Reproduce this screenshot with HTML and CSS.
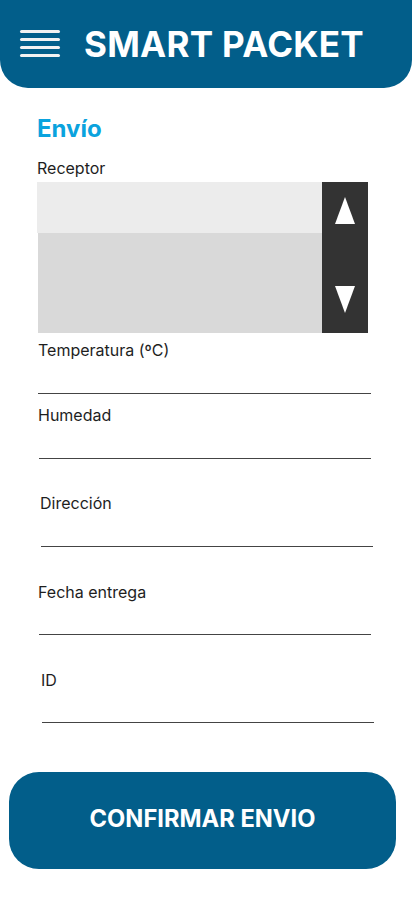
FILE: index.html
```html
<!DOCTYPE html>
<html lang="es">
<head>
<meta charset="utf-8">
<title>Smart Packet</title>
<link rel="stylesheet" href="styles.css">
</head>
<body>
<header class="topbar">
  <div class="burger"><span></span><span></span><span></span><span></span></div>
  <h1 class="brand">SMART PACKET</h1>
</header>
<main class="form">
  <h2 class="title">Envío</h2>
  <div class="label">Receptor</div>
  <div class="listbox">
    <div class="list">
      <div class="item item-sel"></div>
      <div class="item item-rest"></div>
    </div>
    <div class="scroll">
      <svg width="20" height="27" viewBox="0 0 20 27"><polygon points="10,0 20,27 0,27" fill="#fff"/></svg>
      <svg width="20" height="27" viewBox="0 0 20 27"><polygon points="0,0 20,0 10,27" fill="#fff"/></svg>
    </div>
  </div>
  <div class="field f-temp"><div class="label">Temperatura (ºC)</div><div class="line"></div></div>
  <div class="field f-hum"><div class="label">Humedad</div><div class="line"></div></div>
  <div class="field f-dir"><div class="label">Dirección</div><div class="line"></div></div>
  <div class="field f-fecha"><div class="label">Fecha entrega</div><div class="line"></div></div>
  <div class="field f-id"><div class="label">ID</div><div class="line"></div></div>
</main>
<div class="actions">
  <button class="confirm">CONFIRMAR ENVIO</button>
</div>
</body>
</html>
```
FILE: styles.css
```css
* { box-sizing: border-box; }
html, body { margin: 0; padding: 0; background: #fff; }
body { font-family: Inter, "Noto Sans", sans-serif; color: #1e1e1e; width: 412px; }

.topbar {
  height: 88px;
  background: #025E8A;
  border-radius: 0 0 28px 28px;
  display: flex;
  align-items: center;
  padding-left: 20px;
  gap: 24px;
}
.burger { width: 40px; display: flex; flex-direction: column; gap: 5px; margin-top: -1px; }
.burger span { display: block; height: 3px; background: #F2F2F2; border-radius: 2px; }
.brand { margin: 0; color: #fff; font-size: 35px; font-weight: 700; line-height: 40px; letter-spacing: 0.3px; }

.form { padding-left: 37px; }
.title { margin: 26px 0 0; font-size: 24px; line-height: 29px; font-weight: 700; color: #0AA3DE; }
.label { font-size: 16px; line-height: 20px; color: #1e1e1e; }
.form > .label { margin-top: 15px; }

.listbox { margin-top: 4px; display: flex; width: 331px; height: 151px; }
.list { width: 285px; display: flex; flex-direction: column; }
.item-sel { height: 51px; background: #ECECEC; }
.item-rest { flex: 1; background: #D9D9D9; margin-left: 1px; }
.scroll {
  width: 46px; background: #333333;
  display: flex; flex-direction: column; align-items: center; justify-content: space-between;
  padding: 15px 0 20px;
}

.field { width: 333px; }
.line { height: 34px; border-bottom: 1px solid #444; }
.f-temp { margin-top: 7px; margin-left: 1px; }
.f-hum { margin-top: 11px; margin-left: 1px; }
.f-hum .line { margin-left: 1px; }
.f-dir { margin-top: 34px; margin-left: 3px; }
.f-dir .line { margin-left: 1px; }
.f-fecha { margin-top: 35px; margin-left: 1px; }
.f-fecha .line { margin-left: 1px; height: 33px; }
.f-id { margin-top: 35px; margin-left: 4px; }
.f-id .line { margin-left: 1px; height: 33px; }

.actions { padding: 49px 16px 0 9px; }
.confirm {
  display: block; width: 387px; height: 97px;
  border: none; border-radius: 30px;
  background: #025E8A; color: #fff;
  font-family: Inter, "Noto Sans", sans-serif;
  font-size: 23.7px; font-weight: 700;
  padding: 0 0 4px;
}
```
